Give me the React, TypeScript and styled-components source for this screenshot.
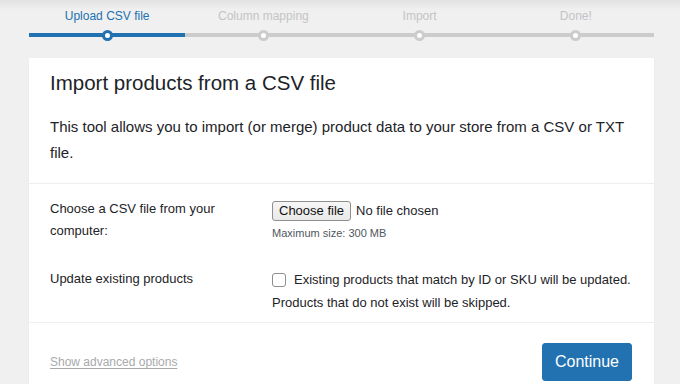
import * as React from 'react';
import styled, { createGlobalStyle } from 'styled-components';

const GlobalStyle = createGlobalStyle`
  html, body {
    margin: 0;
    padding: 0;
    background: #f0f0f0;
  }
  body {
    font-family: "Liberation Sans", Arial, sans-serif;
    color: #1d2327;
    -webkit-font-smoothing: antialiased;
  }
`

const Page = styled.div`
  height: 384px;
  padding: 0 26px 0 29px;
  background: linear-gradient(to bottom, #e2e2e2 0px, #efefef 9px, #f0f0f0 14px);
  overflow: hidden;
`

const Steps = styled.ol`
  display: grid;
  grid-template-columns: repeat(4, 1fr);
  margin: 0;
  padding: 8px 0 0;
  list-style: none;
`

const Step = styled.li<{ $done?: boolean }>`
  display: flex;
  flex-direction: column;
  align-items: center;
  gap: 9px;
  color: ${p => (p.$done ? '#2271b1' : '#c3c4c7')};
  font-size: 12px;
  line-height: 16px;
`

const Track = styled.div<{ $done?: boolean }>`
  position: relative;
  align-self: stretch;
  height: 4px;
  background: ${p => (p.$done ? '#2271b1' : '#cccccc')};
`

const Dot = styled.span<{ $done?: boolean }>`
  position: absolute;
  left: 50%;
  top: 50%;
  width: 5px;
  height: 5px;
  margin: -5.5px 0 0 -5.5px;
  border-radius: 50%;
  background: #fff;
  border: 3px solid ${p => (p.$done ? '#2271b1' : '#cccccc')};
`

const Card = styled.div`
  margin-top: 21px;
  background: #fff;
  box-shadow: 0 1px 2px rgba(0, 0, 0, 0.04);
`

const Header = styled.header`
  padding: 11px 22px 17px 21px;
  border-bottom: 1px solid #eeeeee;
`

const Title = styled.h2`
  margin: 0;
  font-size: 20.5px;
  font-weight: 400;
  line-height: 28px;
`

const Intro = styled.p`
  margin: 17px 0 0;
  font-size: 15px;
  line-height: 26px;
`

const Fields = styled.section`
  display: flex;
  flex-direction: column;
  gap: 26px;
  padding: 14px 22px 8px 21px;
  border-bottom: 1px solid #eeeeee;
`

const FieldRow = styled.div`
  display: grid;
  grid-template-columns: 212px 1fr;
  column-gap: 10px;
`

const FieldLabel = styled.label`
  font-size: 13px;
  line-height: 22px;
`

const FieldBody = styled.div`
  display: flex;
  flex-direction: column;
  font-size: 13px;
  line-height: 23px;
`

const FileLine = styled.div`
  display: flex;
  align-items: center;
  gap: 5px;
  padding-top: 1px;
  font-size: 13px;
`

const FileButton = styled.span`
  display: inline-flex;
  align-items: center;
  height: 18px;
  padding: 0 6px;
  border: 1px solid #8f8f8f;
  border-radius: 3px;
  background: linear-gradient(#f6f6f6, #e9e9e9);
  color: #111;
`

const Hint = styled.small`
  margin-top: 4px;
  font-size: 11px;
  line-height: 14px;
  color: #50575e;
`

const CheckLine = styled.label`
  display: flex;
  align-items: center;
  gap: 8px;
  white-space: nowrap;
`

const Box = styled.span`
  flex: none;
  width: 12px;
  height: 12px;
  border: 1px solid #8c8f94;
  border-radius: 3px;
  background: #fff;
`

const Footer = styled.footer`
  display: flex;
  align-items: center;
  justify-content: space-between;
  padding: 20px 22px 20px 21px;
`

const AdvancedLink = styled.a`
  font-size: 12px;
  color: #a7aaad;
  text-decoration: underline;
  text-underline-offset: 2px;
`

const ContinueButton = styled.button`
  height: 38px;
  padding: 0 12px;
  border: 1px solid #2271b1;
  border-radius: 3px;
  background: #2271b1;
  color: #fff;
  font-family: inherit;
  font-size: 16px;
`

const steps = ['Upload CSV file', 'Column mapping', 'Import', 'Done!'];

const App = () => {
  return (
    <React.Fragment>
      <GlobalStyle />
      <Page>
        <Steps>
          {steps.map((name, i) => (
            <Step key={name} $done={i === 0}>
              {name}
              <Track $done={i === 0}>
                <Dot $done={i === 0} />
              </Track>
            </Step>
          ))}
        </Steps>

        <Card>
          <Header>
            <Title>Import products from a CSV file</Title>
            <Intro>
              This tool allows you to import (or merge) product data to your store from a CSV or TXT file.
            </Intro>
          </Header>

          <Fields>
            <FieldRow>
              <FieldLabel>Choose a CSV file from your computer:</FieldLabel>
              <FieldBody>
                <FileLine>
                  <FileButton>Choose file</FileButton>
                  No file chosen
                </FileLine>
                <Hint>Maximum size: 300 MB</Hint>
              </FieldBody>
            </FieldRow>
            <FieldRow>
              <FieldLabel>Update existing products</FieldLabel>
              <FieldBody>
                <CheckLine>
                  <Box />
                  Existing products that match by ID or SKU will be updated.
                </CheckLine>
                Products that do not exist will be skipped.
              </FieldBody>
            </FieldRow>
          </Fields>

          <Footer>
            <AdvancedLink>Show advanced options</AdvancedLink>
            <ContinueButton>Continue</ContinueButton>
          </Footer>
        </Card>
      </Page>
    </React.Fragment>
  );
};

export default App;
